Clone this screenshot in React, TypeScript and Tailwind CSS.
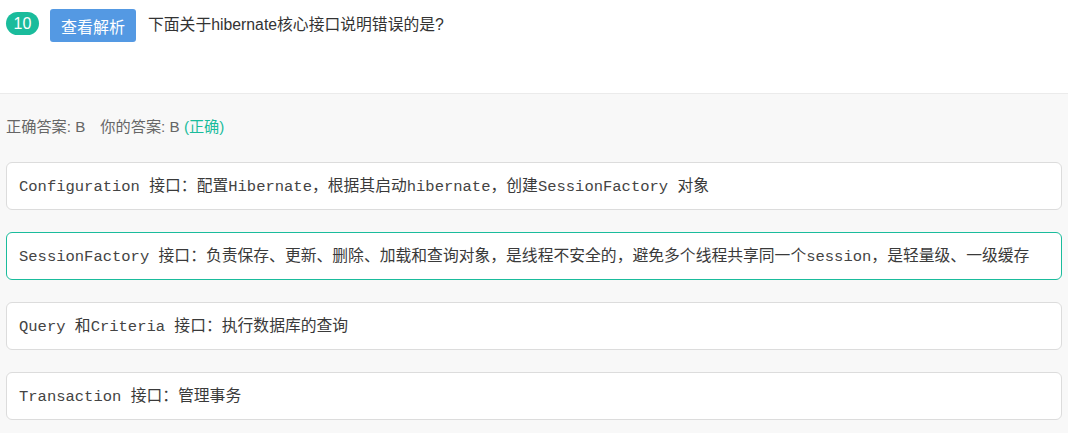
const options = [
  {
    id: 'A',
    parts: [
      { code: 'Configuration ' },
      { text: '接口：配置' },
      { code: 'Hibernate' },
      { text: '，根据其启动' },
      { code: 'hibernate' },
      { text: '，创建' },
      { code: 'SessionFactory ' },
      { text: '对象' },
    ],
  },
  {
    id: 'B',
    parts: [
      { code: 'SessionFactory ' },
      { text: '接口：负责保存、更新、删除、加载和查询对象，是线程不安全的，避免多个线程共享同一个' },
      { code: 'session' },
      { text: '，是轻量级、一级缓存' },
    ],
  },
  {
    id: 'C',
    parts: [{ code: 'Query ' }, { text: '和' }, { code: 'Criteria ' }, { text: '接口：执行数据库的查询' }],
  },
  {
    id: 'D',
    parts: [{ code: 'Transaction ' }, { text: '接口：管理事务' }],
  },
];

type Part = { code?: string; text?: string };

const App: React.FC = () => {
  const correct = 'B';

  return (
    <div className="w-[1068px] h-[433px] bg-[#f8f8f8] font-['Liberation_Sans','Noto_Sans_CJK_SC',sans-serif] overflow-hidden">
      <div className="h-[94px] bg-white border-b border-[#ebebeb] pt-[9px] pl-[6px]">
        <div className="flex items-start">
          <span className="mt-[3px] h-[23px] w-[33px] rounded-full bg-[#1abc9c] text-white text-[16px] leading-[23px] text-center">
            10
          </span>
          <button className="ml-[11px] h-[33px] w-[86px] rounded-[3px] bg-[#5499e3] text-white text-[16px] font-['Noto_Sans_CJK_SC',sans-serif]">
            查看解析
          </button>
          <span className="ml-3 mt-[6px] text-[15.8px] leading-[20px] text-[#333]">
            下面关于hibernate核心接口说明错误的是?
          </span>
        </div>
      </div>

      <div className="px-[6px]">
        <div className="mt-[23px] h-[20px] text-[15.2px] leading-[20px] text-[#666]">
          正确答案: B
          <span className="ml-[15px]">你的答案: B </span>
          <span className="text-[#1abc9c]">(正确)</span>
        </div>

        <div className="mt-[25px] flex flex-col gap-[22px]">
          {options.map((opt) => (
            <div
              key={opt.id}
              className={`h-[48px] flex items-center pl-[12px] rounded-[6px] bg-white border ${
                opt.id === correct ? 'border-[#1abc9c]' : 'border-[#dcdcdc]'
              }`}
            >
              <div className="text-[15.8px] text-[#3a3a3a] whitespace-pre font-['Noto_Sans_CJK_SC',sans-serif] leading-[20px]">
                {opt.parts.map((p: Part, i) =>
                  p.code ? (
                    <span key={i} className="font-['Liberation_Mono',monospace] text-[15.5px] text-[#444]">
                      {p.code}
                    </span>
                  ) : (
                    <span key={i}>{p.text}</span>
                  )
                )}
              </div>
            </div>
          ))}
        </div>
      </div>
    </div>
  );
};

export default App;
